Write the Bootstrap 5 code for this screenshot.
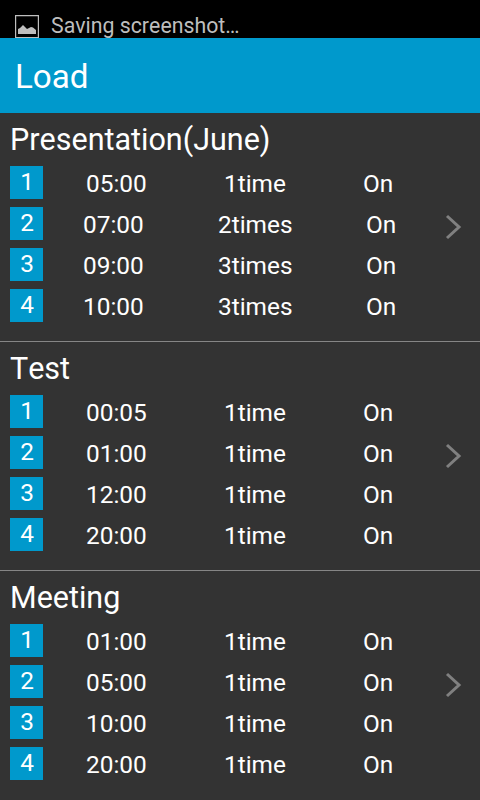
<!DOCTYPE html>
<html lang="en">
<head>
<meta charset="utf-8">
<meta name="viewport" content="width=device-width, initial-scale=1">
<title>Load</title>
<link rel="stylesheet" href="https://cdn.jsdelivr.net/npm/bootstrap@5.3.0/dist/css/bootstrap.min.css">
<style>
body { font-family: Roboto, "Liberation Sans", sans-serif; font-kerning: none; background: #333; color: #fff; height: 800px; }
.status-bar { height: 38px; background: #000; color: #bebebe; padding: 14px 0 0 15px; }
.status-bar span { font-size: 21.3px; line-height: 24px; margin-left: 12px; }
.title-bar { height: 75px; background: #09c; padding: 2px 0 0 15px; }
.title-bar h1 { font-size: 33.2px; line-height: 40px; font-weight: 400; }
.preset { height: 229px; padding: 9px 0 0 10px; border-bottom: 1px solid #868686; }
.preset:last-child { border-bottom-color: transparent; }
.preset h2 { font-size: 30.5px; line-height: 35px; font-weight: 400; margin-bottom: 9px; }
.alarm { height: 33px; margin-bottom: 8px; font-size: 24.4px; line-height: 36px; white-space: nowrap; }
.num { width: 33px; height: 33px; line-height: 31px; padding-left: 1px; background: #09c; }
.time { margin-left: 43px; width: 138px; }
.count { width: 139px; }
.plural .time { margin-left: 40px; width: 135px; }
.plural .count { width: 148px; }
.chevron { margin: 0 18px 9px 0; }
</style>
<script src="https://cdn.jsdelivr.net/npm/bootstrap@5.3.0/dist/js/bootstrap.bundle.min.js"></script>
</head>
<body class="overflow-hidden">
<div class="status-bar d-flex align-items-start overflow-hidden">
  <svg class="flex-shrink-0" width="24" height="24" viewBox="0 0 24 24"><path d="M.6 1.6h22.800v22H.6z" fill="none" stroke="#bebebe" stroke-width="1.200"/><path d="M3 20v-5l2-1 3-3 4 4 4-2 2 .5 3 2.500v4z" fill="#bebebe"/></svg>
  <span>Saving screenshot…</span>
</div>
<header class="title-bar d-flex align-items-center"><h1 class="m-0">Load</h1></header>
<main id="presets"></main>
<script>
const presets = [
  ["Presentation(June)", [["05:00", 1], ["07:00", 2], ["09:00", 3], ["10:00", 3]]],
  ["Test", [["00:05", 1], ["01:00", 1], ["12:00", 1], ["20:00", 1]]],
  ["Meeting", [["01:00", 1], ["05:00", 1], ["10:00", 1], ["20:00", 1]]]
];
document.getElementById("presets").innerHTML = presets.map(([name, alarms]) => `
  <section class="preset d-flex justify-content-between align-items-center">
    <div class="align-self-start">
      <h2>${name}</h2>
      ${alarms.map(([time, n], i) => `
      <div class="alarm d-flex ${n > 1 ? "plural" : ""}">
        <div class="num text-center">${i + 1}</div>
        <div class="time">${time}</div>
        <div class="count">${n}${n > 1 ? "times" : "time"}</div>
        <div>On</div>
      </div>`).join("")}
    </div>
    <svg class="chevron flex-shrink-0" width="17" height="26" viewBox="0 0 17 26"><path d="M2 2l12 11L2 24" fill="none" stroke="#808080" stroke-width="3"/></svg>
  </section>`).join("");
</script>
</body>
</html>
